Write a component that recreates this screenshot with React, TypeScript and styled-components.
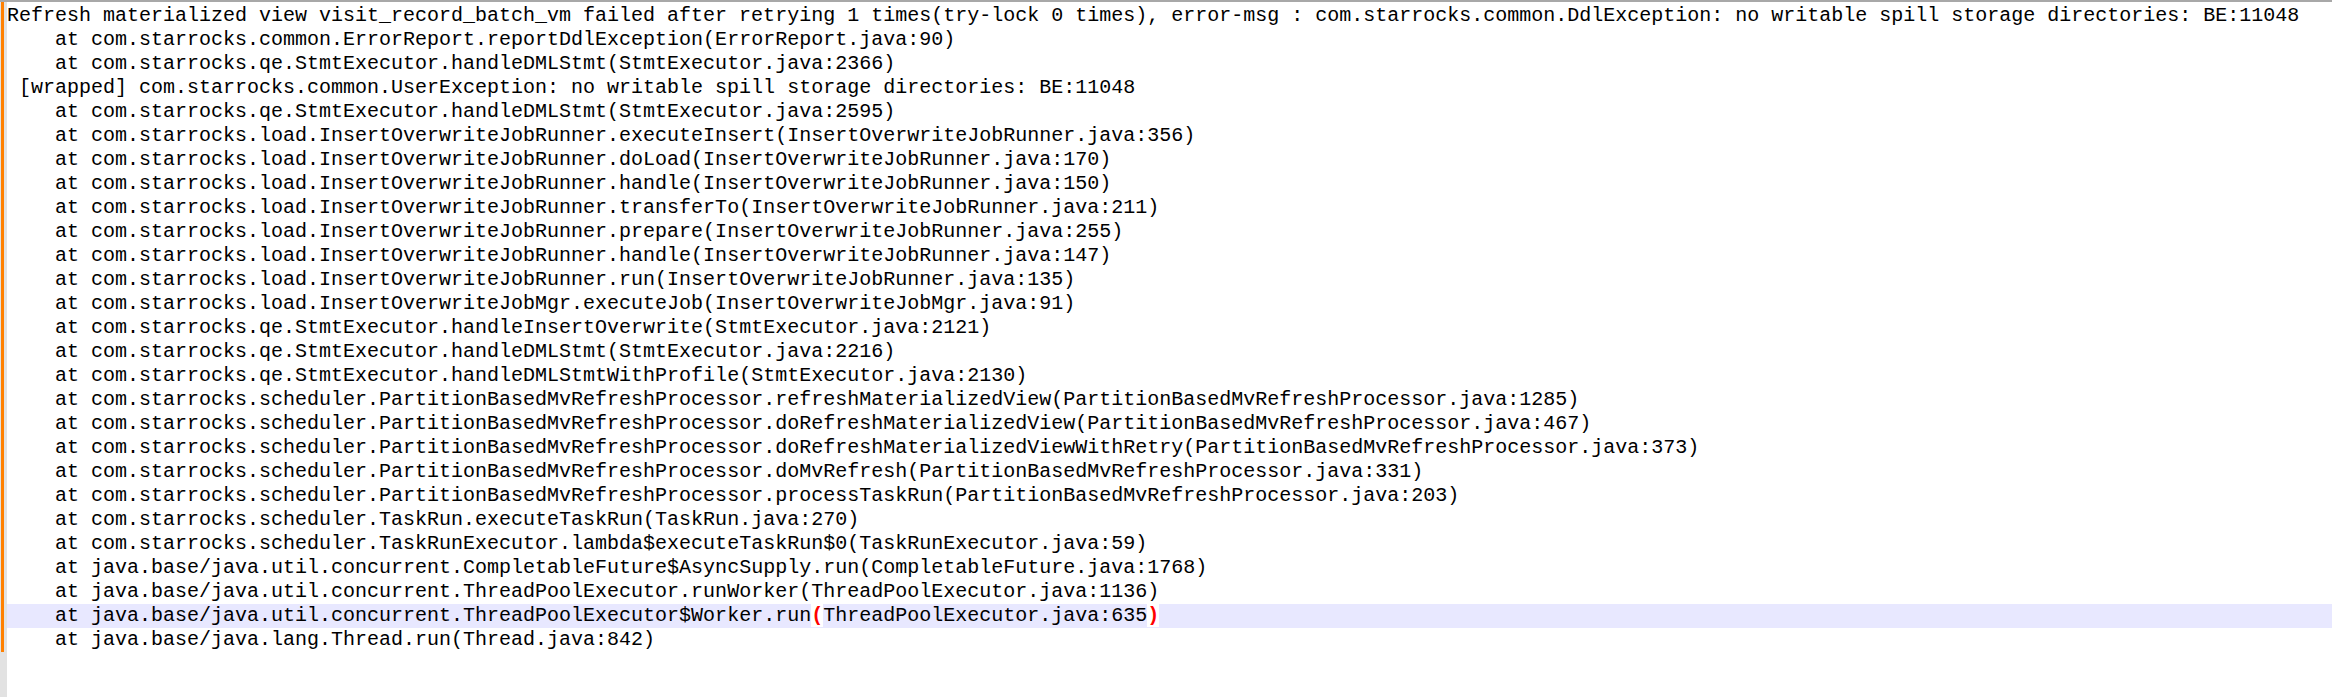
import React from "react";
import styled, { createGlobalStyle } from "styled-components";

const GlobalStyle = createGlobalStyle`
  html, body {
    margin: 0;
    padding: 0;
    background: #fff;
  }
  #root {
    height: 697px;
  }
`;

const LINE_HEIGHT = 24;

const Editor = styled.div`
  display: flex;
  flex-direction: column;
  height: 100%;
  background: #fff;
  border-top: 2px solid #a8a8a8;
  box-sizing: border-box;
  overflow: hidden;
`;

const Body = styled.div`
  display: flex;
  flex: 1;
`;

const Gutter = styled.div`
  width: 7px;
  flex-shrink: 0;
  background: #e2e2e2;
  display: flex;
  align-items: flex-start;
`;

interface ChangeBarProps {
  $lines: number;
}

const ChangeBar = styled.div<ChangeBarProps>`
  width: 3px;
  margin-left: 1px;
  height: ${({ $lines }) => $lines * LINE_HEIGHT + 2}px;
  background: #ff8000;
`;

const TextArea = styled.div`
  flex: 1;
  display: flex;
  flex-direction: column;
  padding-top: 2px;
`;

interface RowProps {
  $current?: boolean;
}

const Row = styled.div<RowProps>`
  height: ${LINE_HEIGHT}px;
  line-height: ${LINE_HEIGHT}px;
  font-family: "Liberation Mono", "Courier New", monospace;
  font-size: 20px;
  color: #000;
  white-space: pre;
  tab-size: 4;
  background: ${({ $current }) => ($current ? "#e8e8ff" : "transparent")};
`;

const Brace = styled.span`
  color: #ff0000;
  font-weight: bold;
  background: #fff;
`;

const lines: string[] = [
  "Refresh materialized view visit_record_batch_vm failed after retrying 1 times(try-lock 0 times), error-msg : com.starrocks.common.DdlException: no writable spill storage directories: BE:11048",
  "\tat com.starrocks.common.ErrorReport.reportDdlException(ErrorReport.java:90)",
  "\tat com.starrocks.qe.StmtExecutor.handleDMLStmt(StmtExecutor.java:2366)",
  " [wrapped] com.starrocks.common.UserException: no writable spill storage directories: BE:11048",
  "\tat com.starrocks.qe.StmtExecutor.handleDMLStmt(StmtExecutor.java:2595)",
  "\tat com.starrocks.load.InsertOverwriteJobRunner.executeInsert(InsertOverwriteJobRunner.java:356)",
  "\tat com.starrocks.load.InsertOverwriteJobRunner.doLoad(InsertOverwriteJobRunner.java:170)",
  "\tat com.starrocks.load.InsertOverwriteJobRunner.handle(InsertOverwriteJobRunner.java:150)",
  "\tat com.starrocks.load.InsertOverwriteJobRunner.transferTo(InsertOverwriteJobRunner.java:211)",
  "\tat com.starrocks.load.InsertOverwriteJobRunner.prepare(InsertOverwriteJobRunner.java:255)",
  "\tat com.starrocks.load.InsertOverwriteJobRunner.handle(InsertOverwriteJobRunner.java:147)",
  "\tat com.starrocks.load.InsertOverwriteJobRunner.run(InsertOverwriteJobRunner.java:135)",
  "\tat com.starrocks.load.InsertOverwriteJobMgr.executeJob(InsertOverwriteJobMgr.java:91)",
  "\tat com.starrocks.qe.StmtExecutor.handleInsertOverwrite(StmtExecutor.java:2121)",
  "\tat com.starrocks.qe.StmtExecutor.handleDMLStmt(StmtExecutor.java:2216)",
  "\tat com.starrocks.qe.StmtExecutor.handleDMLStmtWithProfile(StmtExecutor.java:2130)",
  "\tat com.starrocks.scheduler.PartitionBasedMvRefreshProcessor.refreshMaterializedView(PartitionBasedMvRefreshProcessor.java:1285)",
  "\tat com.starrocks.scheduler.PartitionBasedMvRefreshProcessor.doRefreshMaterializedView(PartitionBasedMvRefreshProcessor.java:467)",
  "\tat com.starrocks.scheduler.PartitionBasedMvRefreshProcessor.doRefreshMaterializedViewWithRetry(PartitionBasedMvRefreshProcessor.java:373)",
  "\tat com.starrocks.scheduler.PartitionBasedMvRefreshProcessor.doMvRefresh(PartitionBasedMvRefreshProcessor.java:331)",
  "\tat com.starrocks.scheduler.PartitionBasedMvRefreshProcessor.processTaskRun(PartitionBasedMvRefreshProcessor.java:203)",
  "\tat com.starrocks.scheduler.TaskRun.executeTaskRun(TaskRun.java:270)",
  "\tat com.starrocks.scheduler.TaskRunExecutor.lambda$executeTaskRun$0(TaskRunExecutor.java:59)",
  "\tat java.base/java.util.concurrent.CompletableFuture$AsyncSupply.run(CompletableFuture.java:1768)",
  "\tat java.base/java.util.concurrent.ThreadPoolExecutor.runWorker(ThreadPoolExecutor.java:1136)",
  "\tat java.base/java.util.concurrent.ThreadPoolExecutor$Worker.run(ThreadPoolExecutor.java:635)",
  "\tat java.base/java.lang.Thread.run(Thread.java:842)",
];

// caret sits on the Worker.run line, its brace pair is highlighted
const CURRENT_LINE = 25;

const renderLine = (text: string, current: boolean) => {
  if (!current) return text;
  const open = text.lastIndexOf("(");
  const close = text.lastIndexOf(")");
  return (
    <>
      {text.slice(0, open)}
      <Brace>(</Brace>
      {text.slice(open + 1, close)}
      <Brace>)</Brace>
      {text.slice(close + 1)}
    </>
  );
};

const App: React.FC = () => {
  return (
    <>
      <GlobalStyle />
      <Editor>
        <Body>
          <Gutter>
            <ChangeBar $lines={lines.length} />
          </Gutter>
          <TextArea>
            {lines.map((line, index) => (
              <Row key={index} $current={index === CURRENT_LINE}>
                {renderLine(line, index === CURRENT_LINE)}
              </Row>
            ))}
          </TextArea>
        </Body>
      </Editor>
    </>
  );
};

export default App;
